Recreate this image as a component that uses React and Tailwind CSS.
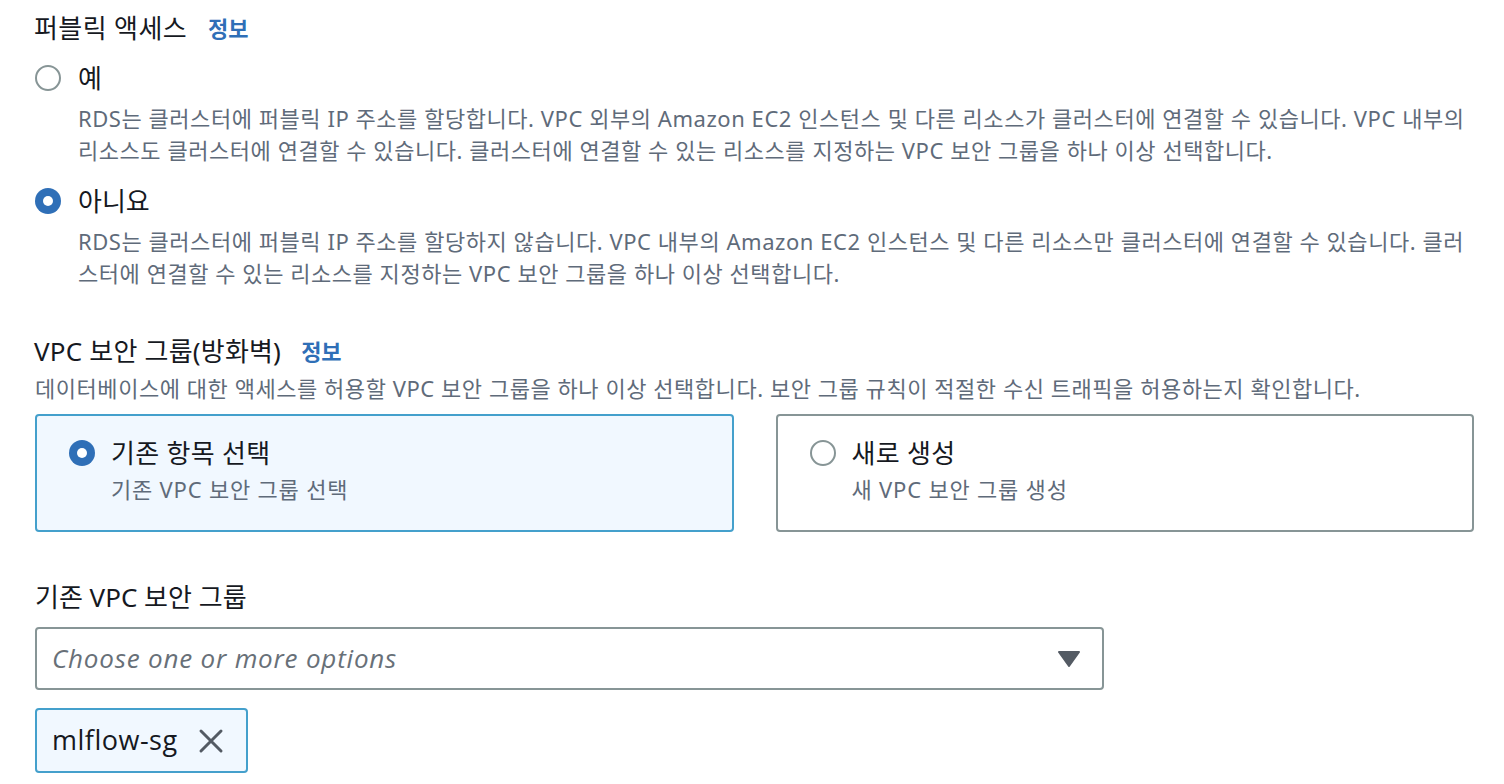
import React from "react";

const font = { fontFamily: '"Noto Sans", "Noto Sans CJK KR", sans-serif' };
const latin = { fontFamily: '"Open Sans", "Noto Sans", sans-serif' };

function Radio({ checked }) {
  if (checked) {
    return (
      <span className="flex shrink-0 w-[26px] h-[26px] rounded-full bg-[#2f6fb7] items-center justify-center">
        <span className="block w-[10px] h-[10px] rounded-full bg-white" />
      </span>
    );
  }
  return <span className="block shrink-0 w-[26px] h-[26px] rounded-full border-2 border-[#879596] bg-white" />;
}

function Option({ checked, label, lines, mt }) {
  return (
    <div className={mt}>
      <div className="flex items-center h-[32px]">
        <Radio checked={checked} />
        <span className="ml-[17px] text-[26px] leading-[32px] text-[#16191f]">{label}</span>
      </div>
      <div className="mt-[8px] pl-[43px] text-[22px] leading-[32px] tracking-[0.55px] text-[#5f6b7a] whitespace-nowrap">
        {lines.map((l, i) => (
          <div key={i}>{l}</div>
        ))}
      </div>
    </div>
  );
}

function Card({ selected, title, sub }) {
  return (
    <div
      className={
        "h-[118px] rounded-[4px] border-2 pt-[21px] pl-[32px] " +
        (selected ? "border-[#44a0cc] bg-[#f1f8ff]" : "border-[#879596] bg-white")
      }
    >
      <div className="flex items-center h-[32px]">
        <Radio checked={selected} />
        <span className="ml-[16px] text-[26px] leading-[32px] tracking-[0.3px] text-[#16191f]">{title}</span>
      </div>
      <div className="mt-[6px] pl-[42px] text-[22px] leading-[28px] tracking-[0.8px] text-[#5f6b7a]">{sub}</div>
    </div>
  );
}

export default function App() {
  return (
    <div className="w-[1504px] h-[784px] bg-white overflow-hidden" style={font}>
      <div className="pl-[35px] pr-[31px] pt-[12px]">
        <div className="flex items-center h-[32px]">
          <span className="text-[26px] leading-[32px] tracking-[0.4px] text-[#16191f] -ml-[1px]">퍼블릭 액세스</span>
          <span className="ml-[21px] text-[22px] font-bold text-[#2f6fb7]">정보</span>
        </div>

        <Option
          mt="mt-[18px]"
          checked={false}
          label="예"
          lines={[
            "RDS는 클러스터에 퍼블릭 IP 주소를 할당합니다. VPC 외부의 Amazon EC2 인스턴스 및 다른 리소스가 클러스터에 연결할 수 있습니다. VPC 내부의",
            "리소스도 클러스터에 연결할 수 있습니다. 클러스터에 연결할 수 있는 리소스를 지정하는 VPC 보안 그룹을 하나 이상 선택합니다.",
          ]}
        />
        <Option
          mt="mt-[19px]"
          checked={true}
          label="아니요"
          lines={[
            "RDS는 클러스터에 퍼블릭 IP 주소를 할당하지 않습니다. VPC 내부의 Amazon EC2 인스턴스 및 다른 리소스만 클러스터에 연결할 수 있습니다. 클러",
            "스터에 연결할 수 있는 리소스를 지정하는 VPC 보안 그룹을 하나 이상 선택합니다.",
          ]}
        />

        <div className="mt-[46px] flex items-center h-[32px]">
          <span className="text-[26px] leading-[32px] tracking-[0.2px] text-[#16191f] -ml-[1px]">VPC 보안 그룹(방화벽)</span>
          <span className="ml-[20px] text-[22px] font-bold text-[#2f6fb7]">정보</span>
        </div>
        <div className="mt-[7px] text-[22px] leading-[28px] tracking-[0.55px] text-[#5f6b7a] whitespace-nowrap">
          데이터베이스에 대한 액세스를 허용할 VPC 보안 그룹을 하나 이상 선택합니다. 보안 그룹 규칙이 적절한 수신 트래픽을 허용하는지 확인합니다.
        </div>

        <div className="mt-[12px] grid grid-cols-2 gap-[42px] w-[1439px]">
          <Card selected={true} title="기존 항목 선택" sub="기존 VPC 보안 그룹 선택" />
          <Card selected={false} title="새로 생성" sub="새 VPC 보안 그룹 생성" />
        </div>

        <div className="mt-[49px] text-[26px] leading-[32px] text-[#16191f]">기존 VPC 보안 그룹</div>

        <div className="mt-[14px] w-[1069px] h-[63px] rounded-[4px] border-2 border-[#879596] flex items-center pl-[15px] pr-[22px]">
          <span className="flex-1 text-[26px] tracking-[0.8px] italic text-[#687078]" style={latin}>Choose one or more options</span>
          <svg width="22" height="16" viewBox="0 0 22 16">
            <path d="M1 1 H21 L11 15 Z" fill="#545b64" stroke="#545b64" strokeWidth="2" strokeLinejoin="round" />
          </svg>
        </div>

        <div className="mt-[18px] w-[213px] h-[65px] rounded-[4px] border-2 border-[#44a0cc] bg-[#f1f8ff] flex items-center pl-[15px]">
          <span className="text-[27px] tracking-[0.5px] text-[#16191f]" style={latin}>mlflow-sg</span>
          <svg className="ml-[20px]" width="26" height="26" viewBox="0 0 26 26">
            <path d="M3 3 L23 23 M23 3 L3 23" stroke="#545b64" strokeWidth="3" strokeLinecap="round" />
          </svg>
        </div>
      </div>
    </div>
  );
}
